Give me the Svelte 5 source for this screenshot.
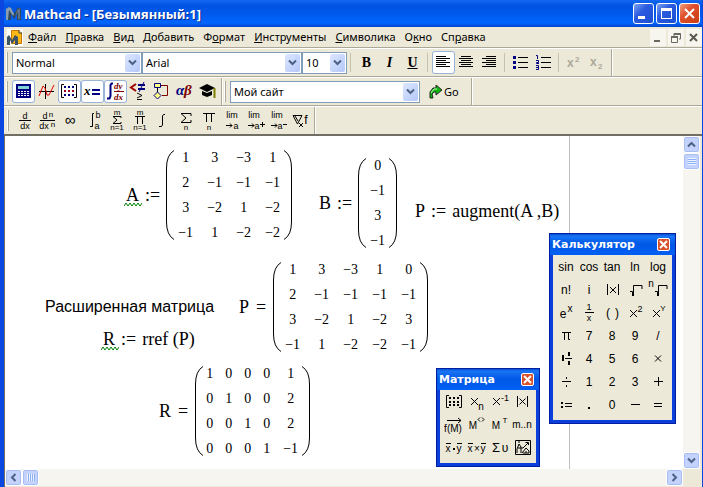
<script lang="ts">
    type Glyph = {
        name: string;
        text?: [number, number, string, number?][]; // x, baseline, string, size
        line?: string; // stroked 1px path
        fill?: string; // solid path
    };

    const menu = [
        ["", "Ф", "айл"],
        ["", "П", "равка"],
        ["", "В", "ид"],
        ["", "Д", "обавить"],
        ["Ф", "о", "рмат"],
        ["", "И", "нструменты"],
        ["", "С", "имволика"],
        ["О", "к", "но"],
        ["Сп", "р", "авка"],
    ];

    const cross = "M8 8.5L14 14.5M14 8.5L8 14.5";

    const calculus: Glyph[] = [
        { name: "Derivative", text: [[12, 10, "d", 9], [12, 20, "dx", 9]], line: "M6 11.5H18" },
        { name: "Nth derivative", text: [[9, 10, "d", 9], [15, 8, "n", 8], [8, 20, "dx", 9], [17, 18, "n", 8]], line: "M4 11.5H19" },
        { name: "Infinity", text: [[11, 16, "∞", 15]] },
        { name: "Definite integral", text: [[16, 9, "b", 9], [15, 20, "a", 9]], line: "M12 4.5H10.5V5V17.5H8" },
        { name: "Summation", text: [[12, 6, "m", 8], [12, 21, "n=1", 8]], line: "M16 9V7.5H8L12 11L8 14.5H16V13" },
        { name: "Product", text: [[12, 6, "m", 8], [12, 21, "n=1", 8]], line: "M7 7.5H17M9.5 7V15M14.5 7V15" },
        { name: "Integral", line: "M14 5.5H12.5L11.5 7V16L10.5 17.5H8" },
        { name: "Range sum", text: [[12, 21, "n", 8]], line: "M17 7V4.5H7L12 9L7 13.5H17V11" },
        { name: "Range product", text: [[12, 21, "n", 8]], line: "M6 4.5H18M9.5 4V13M14.5 4V13" },
        { name: "Limit", text: [[12, 9, "lim", 9], [16, 20, "a", 9]], line: "M6 16.5H12M10 14.5L12 16.5L10 18.5" },
        { name: "Limit from right", text: [[11, 9, "lim", 9], [14, 20, "a", 9]], line: "M5 16.5H11M9 14.5L11 16.5L9 18.5M17 15.5H22M19.5 13V18" },
        { name: "Limit from left", text: [[11, 9, "lim", 9], [14, 20, "a", 9]], line: "M5 16.5H11M9 14.5L11 16.5L9 18.5M17 15.5H21" },
        { name: "Gradient", text: [[17, 15, "f", 12]], line: "M4 6.5H13L8.5 15ZM6 7L9 12M10 14L14 18M14 14L10 18" },
    ];

    const calculator: Glyph[] = [
        ...["sin", "cos", "tan", "ln", "log", "n!", "i"].map(txt),
        { name: "Absolute value", line: "M6.5 6V17M17.5 6V17M9 9L15 15M15 9L9 15" },
        { name: "Square root", line: "M6 13.5H8.5V18M9.5 18V7.5H18V11" },
        { name: "Nth root", text: [[4, 9, "n", 10]], line: "M8 13.5H10.5V18M11.5 18V7.5H20V11" },
        { name: "Exponential", text: [[8, 17, "e", 12], [15, 11, "x", 10]] },
        { name: "Inverse", text: [[11, 9, "1", 9], [11, 20, "x", 9]], line: "M7 11.5H16" },
        { name: "Parentheses", text: [[7, 16, "(", 12], [16, 16, ")", 12]] },
        { name: "Square", text: [[16, 11, "2", 9]], line: "M6 9L13 16M13 9L6 16" },
        { name: "Power", text: [[16, 10, "Y", 8]], line: "M6 9L13 16M13 9L6 16" },
        { name: "Pi", line: "M7 8.5H16M9.5 8V16M13.5 8V15.5H15" },
        ...["7", "8", "9", "/"].map(txt),
        { name: "Mixed number", fill: "M7 8h2v6h-2zM13 5h2v4h-2zM10 11h7v1h-7zM13 14h2v4h-2z" },
        ...["4", "5", "6"].map(txt),
        { name: "Multiply", line: cross },
        { name: "Divide", line: "M7 11.5H16", fill: "M11 7h1v2h-1zM11 15h1v2h-1z" },
        ...["1", "2", "3"].map(txt),
        { name: "Add", line: "M7 11.5H16M11.5 7V16" },
        { name: "Assign", line: "M10 10.5H17M10 13.5H17", fill: "M6 9h2v2h-2zM6 13h2v2h-2z" },
        { name: "Decimal point", fill: "M10 14h2v2h-2z" },
        txt("0"),
        { name: "Subtract", line: "M7 11.5H16" },
        { name: "Equals", line: "M7 10.5H15M7 13.5H15" },
    ];

    const matrixTools: Glyph[] = [
        {
            name: "Matrix",
            line: "M7 5.5H4.5V17.5H7M17 5.5H19.5V17.5H17",
            fill: "M7 7h2v2h-2zM11 7h2v2h-2zM15 7h2v2h-2zM7 11h2v2h-2zM11 11h2v2h-2zM15 11h2v2h-2zM7 14h2v2h-2zM11 14h2v2h-2zM15 14h2v2h-2z",
        },
        { name: "Subscript", text: [[16, 20, "n", 10]], line: "M6 8L13 15M13 8L6 15" },
        { name: "Matrix inverse", text: [[17, 11, "-1", 9]], line: "M5 8L12 15M12 8L5 15" },
        { name: "Determinant", line: "M6.5 6V17M16.5 6V17M8.5 8.5L14.5 14.5M14.5 8.5L8.5 14.5" },
        { name: "Vectorize", text: [[11, 19, "f(M)", 10]], line: "M5 7.5H19M16 5L19 7.5L16 10" },
        { name: "Column", text: [[8, 16, "M", 10]], line: "M15 4.5L13 6.5L15 8.5M17 4.5L19 6.5L17 8.5" },
        { name: "Transpose", text: [[8, 16, "M", 10], [17, 10, "T", 8]] },
        { name: "Range", text: [[11, 15, "m..n", 10]] },
        { name: "Dot product", text: [[6, 16, "x", 10], [17, 16, "y", 10]], line: "M4 7.5H9M15 7.5H20", fill: "M11 12h2v2h-2z" },
        { name: "Cross product", text: [[5, 16, "x", 10], [12, 16, "×", 10], [18, 16, "y", 10]], line: "M3 7.5H8M16 7.5H21" },
        { name: "Vector sum", text: [[8, 16, "Σ", 13], [17, 16, "υ", 12]] },
        {
            name: "Picture",
            line: "M4.5 4.5H19.5V18.5H4.5ZM6 17V13L8 8L10 11V17M7 12H12L17 7M14.5 6.5H17.5V9M11 17L15 12L18 15V17H12M15 15V17M7 6L9 6",
        },
    ];

    const matrixA = [[1, 3, -3, 1], [2, -1, -1, -1], [3, -2, 1, -2], [-1, 1, -2, -2]];
    const matrixB = [[0], [-1], [3], [-1]];
    const matrixP = [[1, 3, -3, 1, 0], [2, -1, -1, -1, -1], [3, -2, 1, -2, 3], [-1, 1, -2, -2, -1]];
    const matrixR = [[1, 0, 0, 0, 1], [0, 1, 0, 0, 2], [0, 0, 1, 0, 2], [0, 0, 0, 1, -1]];

    function txt(s: string): Glyph {
        return { name: s, text: [[11, 16, s, 12]] };
    }

    // A column that holds a negative number is wider
    function colWidth(rows: number[][], i: number) {
        return rows.some((r) => r[i] < 0) ? 29 : 19;
    }
</script>

{#snippet glyph(g: Glyph)}
    <button class="tool" aria-label={g.name}>
        <svg width="23" height="23" viewBox="0 0 23 23">
            {#if g.line}<path d={g.line} fill="none" stroke="#000" />{/if}
            {#if g.fill}<path d={g.fill} />{/if}
            {#each g.text ?? [] as [x, y, s, size]}
                <text {x} {y} font-size={size} text-anchor="middle">{s}</text>
            {/each}
        </svg>
    </button>
{/snippet}

{#snippet chevron(dir: string)}
    <svg class="chev {dir}" width="9" height="9" viewBox="0 0 9 9">
        <path d="M1 2.5L4.5 6L8 2.5" fill="none" stroke="#4d6185" stroke-width="2" />
    </svg>
{/snippet}

{#snippet combo(label: string, value: string, size: string)}
    <label class="combo {size}">
        <select aria-label={label}><option>{value}</option></select>
        <span class="drop">{@render chevron("down")}</span>
    </label>
{/snippet}

{#snippet logo()}
    <svg class="logo" width="16" height="16" viewBox="0 0 16 16">
        <path d="M1 14V3L4 1L8 8L12 1L15 3V14H11V8L8 13L5 8V14Z" fill="#33475c" />
        <path d="M0 3L3 1L5 2L8 8L7 10L3 4L2 14H0Z" fill="#8aa0b0" />
        <path d="M11 4L14 2V13H12V6L9 11Z" fill="#5c7488" />
    </svg>
{/snippet}

{#snippet matrix(rows: number[][])}
    <div class="matrix">
        <svg width="8" height="90" viewBox="0 0 8 90">
            <path d="M8 0.5Q0.5 5 0.5 18V72Q0.5 85 8 89.5" fill="none" stroke="#000" />
        </svg>
        <table>
            <tbody>
                {#each rows as row}
                    <tr>
                        {#each row as n, i}
                            <td style="width: {colWidth(rows, i)}px">{n < 0 ? "−" + -n : n}</td>
                        {/each}
                    </tr>
                {/each}
            </tbody>
        </table>
        <svg width="8" height="90" viewBox="0 0 8 90">
            <path d="M0 0.5Q7.5 5 7.5 18V72Q7.5 85 0 89.5" fill="none" stroke="#000" />
        </svg>
    </div>
{/snippet}

{#snippet name(s: string, warn = false)}
    <span class="name">
        {s}
        {#if warn}
            <svg class="squiggle" width="18" height="5" viewBox="0 0 18 5">
                <path d="M0 4L2 1L4 4L6 1L8 4L10 1L12 4L14 1L16 4L18 1" fill="none" stroke="#008000" />
            </svg>
        {/if}
    </span>
{/snippet}

{#snippet palette(title: string, cls: string, tools: Glyph[])}
    <section class="palette {cls}">
        <header>
            <h2>{title}</h2>
            <button class="close" aria-label="Close">
                <svg width="9" height="9" viewBox="0 0 9 9"><path d="M1 1L8 8M8 1L1 8" stroke="#fff" stroke-width="2" /></svg>
            </button>
        </header>
        <div class="keys">
            {#each tools as g}{@render glyph(g)}{/each}
        </div>
    </section>
{/snippet}

<div class="window">
    <header class="titlebar">
        {@render logo()}
        <h1>Mathcad - [Безымянный:1]</h1>
        <button class="win" aria-label="Minimize">
            <svg width="19" height="19"><path d="M4 12h7v3h-7z" fill="#fff" /></svg>
        </button>
        <button class="win" aria-label="Maximize">
            <svg width="19" height="19"><path d="M4 4h11v11h-11zM5 7v7h9v-7z" fill="#fff" fill-rule="evenodd" /></svg>
        </button>
        <button class="win red" aria-label="Close">
            <svg width="19" height="19"><path d="M5 5L14 14M14 5L5 14" stroke="#fff" stroke-width="2" /></svg>
        </button>
    </header>

    <nav class="menubar">
        <svg class="doc" width="16" height="17" viewBox="0 0 16 17">
            <path d="M0 0H16V17H0Z" fill="#fff" />
            <path d="M4.5 1.5H12L14.5 4V14.5H4.5Z" fill="#fdb913" stroke="#c77700" />
            <path d="M12 1V4H15" fill="#fff3c0" stroke="#333" />
            <path d="M0 16V8L2 6L5 11L8 6L11 8V16H8V11L5 15L3 11V16Z" fill="#3c5368" />
        </svg>
        {#each menu as [pre, key, rest]}
            <button class="item">{pre}<u>{key}</u>{rest}</button>
        {/each}
        <div class="mdi">
            <button aria-label="Minimize document"><svg width="16" height="17"><path d="M4 11h6v2h-6z" fill="#6b695f" /></svg></button>
            <button aria-label="Restore document">
                <svg width="16" height="17"><path d="M6 7V4.5H12.5V10H11M6 5.5H12.5M3.5 7V13.5H9.5V7M3 8.5H10M3 7.5H10" fill="none" stroke="#6b695f" /></svg>
            </button>
            <button aria-label="Close document"><svg width="16" height="17"><path d="M4 5L11 12M11 5L4 12" stroke="#5a584f" stroke-width="2" /></svg></button>
        </div>
    </nav>

    <div class="row">
        <div class="bar">
            <i class="grip"></i>
            <div class="combos">
                {@render combo("Style", "Normal", "style")}
                {@render combo("Font", "Arial", "font")}
                {@render combo("Size", "10", "size")}
            </div>
            <i class="sep"></i>
            <button class="tool fmt"><b>B</b></button>
            <button class="tool fmt"><em>I</em></button>
            <button class="tool fmt"><u>U</u></button>
            <i class="sep"></i>
            <button class="tool on" aria-label="Align left">
                <svg width="23" height="23"><path d="M4 5.5H14M4 7.5H18M4 9.5H14M4 11.5H18M4 13.5H14M4 15.5H18" stroke="#000" /></svg>
            </button>
            <button class="tool" aria-label="Center">
                <svg width="23" height="23"><path d="M6 5.5H16M4 7.5H18M6 9.5H16M4 11.5H18M6 13.5H16M4 15.5H18" stroke="#000" /></svg>
            </button>
            <button class="tool" aria-label="Align right">
                <svg width="23" height="23"><path d="M8 5.5H18M4 7.5H18M8 9.5H18M4 11.5H18M8 13.5H18M4 15.5H18" stroke="#000" /></svg>
            </button>
            <i class="sep"></i>
            <button class="tool" aria-label="Bullets">
                <svg width="23" height="23">
                    <path d="M9 6.5H19M9 11.5H19M9 16.5H19" stroke="#000" />
                    <path d="M4 5h3v3h-3zM4 10h3v3h-3zM4 15h3v3h-3z" fill="#000080" />
                </svg>
            </button>
            <button class="tool" aria-label="Numbering">
                <svg width="23" height="23">
                    <path d="M9 6.5H19M9 11.5H19M9 16.5H19" stroke="#000" />
                    <path d="M4 4.5H5.5V8M4 9.5H6.5V11.5H4.5V12.5H7M4 14.5H6.5V18.5H4M4 16.5H6" fill="none" stroke="#000080" />
                </svg>
            </button>
            <i class="sep"></i>
            <button class="tool" aria-label="Superscript" disabled>
                <svg width="23" height="23"><text class="pale" x="4" y="16" font-size="12">x</text><text class="pale" x="12" y="11" font-size="8">2</text></svg>
            </button>
            <button class="tool" aria-label="Subscript" disabled>
                <svg width="23" height="23"><text class="pale" x="4" y="15" font-size="12">x</text><text class="pale" x="12" y="18" font-size="8">2</text></svg>
            </button>
        </div>
    </div>

    <div class="row">
        <div class="bar">
            <i class="grip"></i>
            <button class="tool on" aria-label="Calculator palette">
                <svg width="23" height="23">
                    <path d="M4 4H19V18H4Z" fill="#000080" />
                    <path d="M6 6H17V9H6Z" fill="#7fd4d4" />
                    <path d="M6 11.5H17M6 13.5H17M6 15.5H17" stroke="#fff" stroke-dasharray="2 1" />
                </svg>
            </button>
            <button class="tool" aria-label="Graph palette">
                <svg width="23" height="23">
                    <path d="M4 11.5H19M10.5 4V19" stroke="#000" />
                    <path d="M4 16L8 6L10 8L12 15L14 15L19 5" fill="none" stroke="#e00000" />
                </svg>
            </button>
            <button class="tool on" aria-label="Matrix palette">
                <svg width="23" height="23">
                    <path d="M6 4.5H3.5V17.5H6M16 4.5H18.5V17.5H16" fill="none" stroke="#000" />
                    <path d="M6 6h2v2h-2zM10 6h2v2h-2zM14 6h2v2h-2zM6 14h2v2h-2zM10 14h2v2h-2zM14 14h2v2h-2z" fill="#000080" />
                    <path d="M6 10h2v2h-2zM10 10h2v2h-2zM14 10h2v2h-2z" fill="#a00020" />
                </svg>
            </button>
            <button class="tool on" aria-label="Evaluation palette">
                <svg width="23" height="23">
                    <text class="serif" x="3" y="15" font-size="13">x</text>
                    <path d="M11 9h8v2h-8zM11 13h8v2h-8z" fill="#000080" />
                </svg>
            </button>
            <button class="tool on" aria-label="Calculus palette">
                <svg width="23" height="23">
                    <path d="M9 3.5H7.5L6.5 5V16L5.5 18.5H3" fill="none" stroke="#000080" stroke-width="2" />
                    <path d="M10 11.5H20" stroke="#800000" />
                    <text class="serif red" x="10" y="9" font-size="9">dy</text>
                    <text class="serif red" x="10" y="20" font-size="9">dx</text>
                </svg>
            </button>
            <button class="tool" aria-label="Boolean palette">
                <svg width="23" height="23">
                    <path d="M9 4L4 7.5L9 11" fill="none" stroke="#a00000" stroke-width="2" />
                    <path d="M11 4h7v2h-7zM11 8h7v2h-7z" fill="#000080" />
                    <path d="M17 2L12 12" stroke="#000080" />
                    <path d="M10 13L15 15.5L10 18M10 19.5H15" fill="none" stroke="#000" />
                </svg>
            </button>
            <button class="tool" aria-label="Programming palette">
                <svg width="23" height="23">
                    <path d="M11 5.5H17.5V15.5H12" fill="none" stroke="#800000" />
                    <path d="M4.5 3.5H10.5V7.5H4.5ZM7.5 12L11 15.5L7.5 19L4 15.5Z" fill="#ffff80" stroke="#000080" />
                    <path d="M7.5 8V12" stroke="#000" />
                </svg>
            </button>
            <button class="tool" aria-label="Greek palette">
                <svg width="23" height="23"><text class="serif blue" x="3" y="15" font-size="15">α</text><text class="serif red" x="11" y="15" font-size="15">β</text></svg>
            </button>
            <button class="tool" aria-label="Symbolic palette">
                <svg width="23" height="23">
                    <path d="M3 8L11 4L19 8L11 12Z" />
                    <path d="M6 11L11 13L16 11V15L11 17L6 15Z" />
                    <path d="M18.5 8V18" stroke="#808000" stroke-width="2" />
                </svg>
            </button>
        </div>
        <div class="bar">
            <i class="grip"></i>
            <div class="combos">{@render combo("Resource", "Мой сайт", "site")}</div>
            <button class="go">
                <svg width="15" height="15" viewBox="0 0 15 15">
                    <path d="M2 14V8L5 4H8V1L14 6L8 11V8H6L4 10L5 14Z" fill="#11b811" stroke="#222" />
                    <path d="M3 9L6 5H9" stroke="#b8ffb0" fill="none" />
                </svg>
                Go
            </button>
        </div>
    </div>

    <div class="row last">
        <div class="bar">
            <i class="grip wide"></i>
            {#each calculus as g}{@render glyph(g)}{/each}
        </div>
    </div>

    <main class="workspace">
        <div class="sheet">
            <div class="margin"></div>
            <div class="region a">{@render name("A", true)}<span>:=</span>{@render matrix(matrixA)}</div>
            <div class="region b">{@render name("B")}<span>:=</span>{@render matrix(matrixB)}</div>
            <div class="region augment">{@render name("P")}<span>:=</span><span>augment(A ,B)</span></div>
            <p class="region note">Расширенная матрица</p>
            <div class="region p">{@render name("P")}<span>=</span>{@render matrix(matrixP)}</div>
            <div class="region rref">{@render name("R", true)}<span>:=</span><span>rref (P)</span></div>
            <div class="region r">{@render name("R")}<span>=</span>{@render matrix(matrixR)}</div>
        </div>
        <div class="scroll vert">
            <button aria-label="Scroll up">{@render chevron("up")}</button>
            <span class="thumb"></span>
            <button aria-label="Scroll down">{@render chevron("down")}</button>
        </div>
        <div class="scroll horz">
            <button aria-label="Scroll left">{@render chevron("left")}</button>
            <span class="thumb"></span>
            <button aria-label="Scroll right">{@render chevron("right")}</button>
        </div>
        {@render palette("Матрица", "small", matrixTools)}
        {@render palette("Калькулятор", "large", calculator)}
    </main>
</div>

<style>
    :global(body) {
        background: #ece9d8;
    }

    .window {
        display: flex;
        flex-direction: column;
        min-height: 100vh;
        box-sizing: border-box;
        border-left: 4px solid #0a46e0;
        border-right: 1px solid #0a46e0;
        background: #ece9d8;
        font-family: "Noto Sans", sans-serif;
        font-size: 11px;
        color: #000;
        overflow: hidden;
    }

    button {
        font: inherit;
        color: inherit;
        padding: 0;
        border: none;
        background: none;
    }

    svg {
        display: block;
        flex: none;
    }

    text {
        font-family: "Liberation Sans", sans-serif;
    }

    .serif {
        font-family: "Liberation Serif", serif;
        font-style: italic;
        font-weight: bold;
    }

    .red {
        fill: #800000;
    }

    .blue {
        fill: #000080;
    }

    .pale {
        fill: #aca899;
        font-weight: bold;
    }

    /* Title bar */
    .titlebar {
        display: flex;
        align-items: center;
        gap: 2px;
        height: 27px;
        margin: 0 -1px 0 -4px;
        padding: 0 3px 0 6px;
        background: linear-gradient(#1468f0, #0054e3 20%, #0058ea 50%, #0066ff 85%, #0044c8);
    }

    h1 {
        flex: 1;
        margin: 0;
        font-size: 13px;
        font-weight: bold;
        color: #fff;
        text-shadow: 1px 1px #0a2a90;
    }

    .win {
        width: 21px;
        height: 21px;
        border: 1px solid #fff;
        border-radius: 3px;
        background: linear-gradient(135deg, #7ba2f0, #2a5be0 40%, #1c4fd0);
    }

    .win.red {
        background: linear-gradient(135deg, #f0a080, #e0502c 40%, #c83c14);
    }

    /* Menu */
    .menubar {
        display: flex;
        align-items: center;
        height: 20px;
        padding-left: 3px;
        gap: 9px;
        border-bottom: 1px solid #aca899;
    }

    .doc {
        margin-right: -4px;
    }

    .item {
        line-height: 16px;
        white-space: nowrap;
    }

    .mdi {
        display: flex;
        gap: 2px;
        margin-left: auto;
    }

    .mdi button {
        background: #f6f5ee;
    }

    /* Toolbars */
    .row {
        display: flex;
        height: 27px;
        border-top: 1px solid #fff;
        border-bottom: 1px solid #aca899;
    }

    .last {
        border-bottom: 2px solid #716f64;
    }

    .bar {
        display: flex;
        align-items: center;
        padding: 0 2px;
        border-right: 1px solid #aca899;
        box-shadow: 1px 0 #fff;
    }

    .bar + .bar {
        padding-right: 12px;
    }

    .grip {
        width: 2px;
        height: 21px;
        margin-right: 4px;
        border-right: 1px solid #aca899;
        border-left: 1px solid #fff;
        box-sizing: border-box;
    }

    .wide {
        margin: 0 4px 0 1px;
    }

    .sep {
        width: 1px;
        height: 19px;
        margin: 0 4px 0 3px;
        background: #c5c2b0;
    }

    .tool {
        width: 23px;
        height: 23px;
    }

    .on {
        background: #fff;
        border-radius: 3px;
        box-shadow: inset 0 0 0 1px #98b5d8;
    }

    .fmt {
        font-family: "Liberation Serif", serif;
        font-size: 14px;
        font-weight: bold;
    }

    .combos {
        display: flex;
    }

    .combo {
        position: relative;
        display: block;
    }

    .style {
        width: 130px;
    }

    .font {
        width: 160px;
    }

    .size {
        width: 45px;
    }

    .site {
        width: 190px;
    }

    select {
        appearance: none;
        width: 100%;
        height: 22px;
        padding: 0 3px;
        border: 1px solid #7f9db9;
        border-radius: 0;
        background: #fff;
        font: inherit;
        color: #000;
        display: block;
    }

    .drop {
        position: absolute;
        top: 2px;
        right: 2px;
        bottom: 2px;
        width: 15px;
        display: grid;
        place-items: center;
        border-radius: 2px;
        background: linear-gradient(135deg, #dce6ff, #b4c8f8);
        pointer-events: none;
    }

    .up {
        transform: rotate(180deg);
    }

    .left {
        transform: rotate(90deg);
    }

    .right {
        transform: rotate(-90deg);
    }

    .go {
        display: flex;
        align-items: center;
        gap: 1px;
        margin-left: 8px;
    }

    /* Worksheet */
    .workspace {
        position: relative;
        flex: 1;
        display: grid;
        grid-template: 1fr 17px / 1fr 17px;
        padding: 0 2px 1px 0;
        border-left: 1px solid #716f64;
    }

    .sheet {
        position: relative;
        min-height: 333px;
        overflow: hidden;
        background: #fff;
    }

    .margin {
        width: 564px;
        height: 100%;
        border-right: 1px solid #c0c0c0;
    }

    .region {
        position: absolute;
        display: flex;
        align-items: center;
        gap: 7px;
        margin: 0;
        font-family: "Liberation Serif", serif;
        font-size: 18px;
        line-height: 20px;
        white-space: nowrap;
    }

    .a {
        left: 121px;
        top: 14px;
        gap: 6px;
    }

    .b {
        left: 314px;
        top: 22px;
        gap: 6px;
    }

    .augment {
        left: 410px;
        top: 65px;
        gap: 6px;
    }

    .note {
        left: 40px;
        top: 161px;
        font-family: "Liberation Sans", sans-serif;
        font-size: 16px;
    }

    .p {
        left: 234px;
        top: 126px;
    }

    .rref {
        left: 98px;
        top: 193px;
        gap: 6px;
    }

    .r {
        left: 154px;
        top: 230px;
    }

    .name {
        position: relative;
    }

    .squiggle {
        position: absolute;
        left: -2px;
        bottom: -2px;
    }

    .matrix {
        display: flex;
    }

    table {
        margin: -5px -3px;
        border-collapse: collapse;
        font-size: 14px;
        line-height: 25px;
        text-align: center;
    }

    td {
        padding: 0;
        box-sizing: border-box;
    }

    /* Scroll bars */
    .scroll {
        display: flex;
        background: #f6f5f0;
    }

    .vert {
        flex-direction: column;
    }

    .scroll button,
    .thumb {
        display: grid;
        place-items: center;
        width: 17px;
        height: 17px;
        box-sizing: border-box;
        border: 1px solid #fff;
        border-radius: 3px;
        background: #c3d3fd;
        box-shadow: inset 0 0 0 1px #a8bdf0;
    }

    .thumb::before {
        content: "";
        width: 8px;
        height: 7px;
        background: repeating-linear-gradient(90deg, #eef4fe 0 1px, #8cb0f8 1px 2px);
    }

    .vert .thumb::before {
        background: repeating-linear-gradient(#eef4fe 0 1px, #8cb0f8 1px 2px);
    }

    .scroll button:last-child {
        margin-top: auto;
    }

    .horz button:last-child {
        margin: 0 0 0 auto;
    }

    /* Floating palettes */
    .palette {
        position: absolute;
        border: 4px solid #0a3fdc;
        border-top: none;
        background: #ece9d8;
        outline: 1px solid #001ea0;
        outline-offset: -1px;
    }

    .small {
        left: 431px;
        top: 232px;
    }

    .large {
        left: 544px;
        top: 97px;
    }

    .palette header {
        display: flex;
        align-items: center;
        justify-content: space-between;
        height: 22px;
        margin: 0 -4px;
        padding: 0 6px 0 3px;
        background: linear-gradient(#0040c8, #1a74f4 15%, #0058e6 50%, #0060f4);
    }

    h2 {
        margin: 0;
        font-family: "DejaVu Sans", sans-serif;
        font-size: 11px;
        font-weight: bold;
        color: #fff;
    }

    .close {
        display: grid;
        place-items: center;
        width: 13px;
        height: 13px;
        border: 1px solid #fff;
        border-radius: 2px;
        box-sizing: border-box;
        background: #d9532c;
    }

    .keys {
        display: grid;
        padding: 0 2px 4px;
    }

    .small .keys {
        grid-template-columns: repeat(4, 23px);
    }

    .large .keys {
        grid-template-columns: repeat(5, 23px);
    }
</style>
